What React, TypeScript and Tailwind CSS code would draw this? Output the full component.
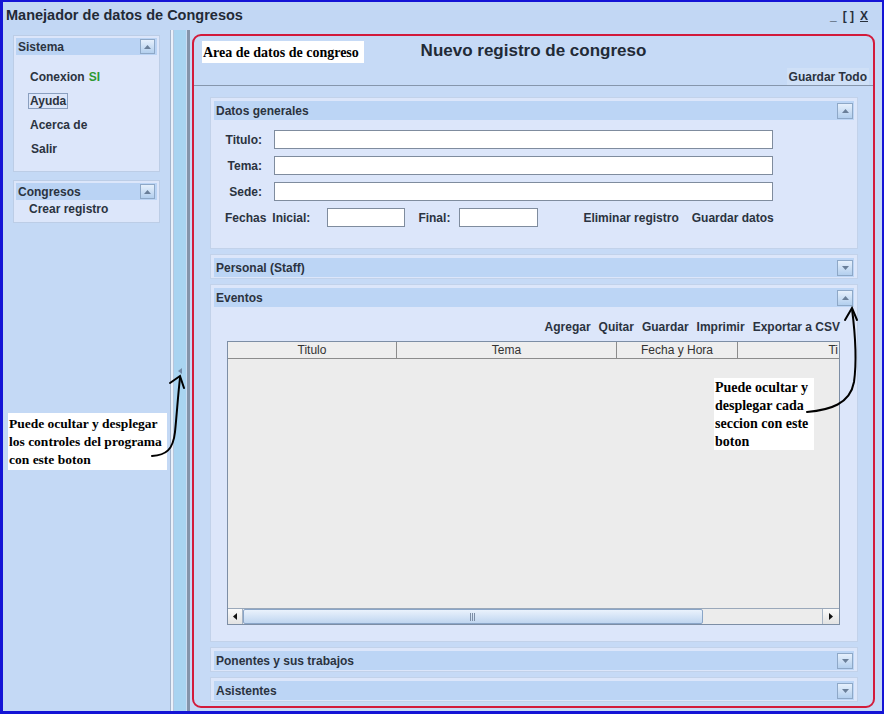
import React from "react";

// ─── Small pieces ─────────────────────────────────────────────────────────────

function CollapseBtn({ up, size = 16 }: { up: boolean; size?: number }) {
  return (
    <div
      className={
        "border border-[#8ea8c7] bg-gradient-to-b from-[#e6f0fc] to-[#b3cfee] flex items-center justify-center " +
        (size === 16 ? "w-[16px] h-[16px]" : "w-[15px] h-[15px]")
      }
    >
      <svg width="7" height="4" viewBox="0 0 7 4">
        <path d={up ? "M0 4 L3.5 0 L7 4 Z" : "M0 0 L3.5 4 L7 0 Z"} fill="#6a7f99" />
      </svg>
    </div>
  );
}

function Section({
  title,
  open,
  className,
  children,
}: {
  title: string;
  open: boolean;
  className: string;
  children?: React.ReactNode;
}) {
  return (
    <div className={"border border-[#c2d2ea] bg-[#dce6fa] px-[3px] pt-[3px] flex flex-col " + className}>
      <div className="h-[19px] shrink-0 bg-[#bcd5f5] flex items-center justify-between pl-[2px] pr-[1px]">
        <span className="text-[12px] font-bold text-[#2b3340]">{title}</span>
        <CollapseBtn up={open} />
      </div>
      {children}
    </div>
  );
}

function Field({ label }: { label: string }) {
  return (
    <div className="flex items-center h-[19px]">
      <span className="w-[48px] text-right text-[12px] font-bold text-[#2b3340]">{label}</span>
      <div className="ml-[12px] w-[499px] h-[19px] bg-white border border-[#7f8c9e]" />
    </div>
  );
}

function SideCard({ title, children, className }: { title: string; children: React.ReactNode; className: string }) {
  return (
    <div className={"border border-[#bccde6] bg-[#dce6fa] p-[2px] " + className}>
      <div className="h-[17px] bg-[#bad3f4] flex items-center justify-between pl-[2px] pr-[2px]">
        <span className="text-[12px] font-bold text-[#2b3340]">{title}</span>
        <CollapseBtn up size={15} />
      </div>
      {children}
    </div>
  );
}

// ─── Main ─────────────────────────────────────────────────────────────────────

export default function App() {
  return (
    <div className="w-[884px] h-[714px] relative border-t-2 border-l-[3px] border-r-2 border-b-[3px] border-[#1414d6] bg-[#c4d9f5] flex flex-col overflow-hidden font-['Liberation_Sans',Arial,sans-serif]">
      {/* ── Title bar ── */}
      <div className="h-[28px] shrink-0 bg-[#c2d7f4] flex items-center justify-between pl-[3px] pr-[14px]">
        <span className="text-[14.5px] font-bold text-[#222a36]">Manejador de datos de Congresos</span>
        <div className="flex items-center gap-[6px] text-[12px] font-bold text-[#27303d]">
          <span>_</span>
          <span>[ ]</span>
          <span className="underline">X</span>
        </div>
      </div>

      <div className="flex flex-1 min-h-0">
        {/* ── Left panel ── */}
        <div className="w-[167px] shrink-0 pl-[10px] pr-[10px] pt-[5px]">
          <SideCard title="Sistema" className="h-[137px]">
            <div className="pl-[14px] pt-[10px] text-[12px] font-bold text-[#2b3340]">
              <div className="h-[24px] flex items-center">
                Conexion <span className="ml-[4px] text-[#2e9a32]">SI</span>
              </div>
              <div className="h-[24px] flex items-center">
                <span className="-ml-[2px] border border-[#8a9fbf] px-[1px] leading-[14px]">Ayuda</span>
              </div>
              <div className="h-[24px] flex items-center">Acerca de</div>
              <div className="h-[24px] flex items-center pl-[1px]">Salir</div>
            </div>
          </SideCard>
          <SideCard title="Congresos" className="mt-[8px] h-[43px]">
            <div className="pl-[13px] h-[18px] flex items-center text-[12px] font-bold text-[#2b3340]">Crear registro</div>
          </SideCard>
        </div>

        {/* ── Splitter ── */}
        <div className="w-[20px] shrink-0 flex">
          <div className="w-[1px] bg-[#a3b5cd]" />
          <div className="w-[2px] bg-[#eaf1fb]" />
          <div className="w-[1px] bg-[#b7c7dc]" />
          <div className="w-[12px] bg-[#a9d4f1] flex items-center justify-center">
            <svg width="4" height="6" viewBox="0 0 4 6">
              <path d="M4 0 L0 3 L4 6 Z" fill="#7288a6" />
            </svg>
          </div>
          <div className="w-[1px] bg-[#c9dcf3]" />
          <div className="w-[3px] bg-[#8494aa]" />
        </div>

        {/* ── Main area ── */}
        <div className="flex-1 min-w-0 pl-[2px] pr-[7px] pt-[4px] pb-[3px] bg-[#c6daf6]">
          <div className="h-full border-2 border-[#d31b3b] rounded-[9px] bg-[#c6daf6] flex flex-col overflow-hidden">
            {/* Header */}
            <div className="h-[50px] shrink-0 relative border-b border-[#8696ac] flex flex-col">
              <div className="pt-[5px] h-[32px] text-center text-[17px] leading-[20px] font-bold text-[#222a36]">
                Nuevo registro de congreso
              </div>
              <div className="flex justify-end pr-[4px]">
                <span className="h-[17px] flex items-center px-[2px] bg-[#cfe0f7] text-[12px] font-bold text-[#2b3340]">
                  Guardar Todo
                </span>
              </div>
              <div className="absolute left-[8px] top-[5px] w-[162px] h-[22px] bg-white flex items-center pl-[1px] font-['Liberation_Serif','Times_New_Roman',serif] text-[14px] font-bold text-black">
                Area de datos de congreso
              </div>
            </div>

            {/* Sections */}
            <div className="flex-1 min-h-0 pl-[16px] pr-[15px] pt-[11px] flex flex-col gap-[5px]">
              <Section title="Datos generales" open className="h-[152px]">
                <div className="pt-[10px] flex flex-col gap-[7px]">
                  <Field label="Titulo:" />
                  <Field label="Tema:" />
                  <Field label="Sede:" />
                  <div className="flex items-center h-[19px] pl-[11px] text-[12px] font-bold text-[#2b3340]">
                    <span>Fechas</span>
                    <span className="ml-[6px]">Inicial:</span>
                    <div className="ml-[17px] w-[78px] h-[19px] bg-white border border-[#7f8c9e]" />
                    <span className="ml-[13px]">Final:</span>
                    <div className="ml-[9px] w-[79px] h-[19px] bg-white border border-[#7f8c9e]" />
                    <span className="ml-[45px]">Eliminar registro</span>
                    <span className="ml-[13px]">Guardar datos</span>
                  </div>
                </div>
              </Section>

              <Section title="Personal (Staff)" open={false} className="h-[25px]" />

              <Section title="Eventos" open className="h-[358px]">
                <div className="pl-[13px] pr-[14px] pt-[12px]">
                  <div className="h-[16px] flex items-center justify-end gap-[8px] text-[12px] font-bold text-[#2b3340]">
                    <span>Agregar</span>
                    <span>Quitar</span>
                    <span>Guardar</span>
                    <span>Imprimir</span>
                    <span>Exportar a CSV</span>
                  </div>
                  {/* Table */}
                  <div className="mt-[6px] h-[284px] border border-[#7d8ea5] bg-[#ececec] flex flex-col">
                    <div className="h-[17px] shrink-0 flex border-b border-[#8c8c8c] bg-[#eeeeee] text-[12px] text-[#333]">
                      <div className="w-[169px] border-r border-[#8c8c8c] flex items-center justify-center">Titulo</div>
                      <div className="w-[220px] border-r border-[#8c8c8c] flex items-center justify-center">Tema</div>
                      <div className="w-[121px] border-r border-[#8c8c8c] flex items-center justify-center">Fecha y Hora</div>
                      <div className="flex-1 flex items-center justify-end pr-[1px]">Ti</div>
                    </div>
                    <div className="flex-1" />
                    {/* Horizontal scrollbar */}
                    <div className="h-[16px] shrink-0 flex border-t border-[#9aa8ba] bg-[#ececec]">
                      <div className="w-[15px] border-r border-[#a6b3c4] bg-gradient-to-b from-[#fafafa] to-[#e2e2e2] flex items-center justify-center">
                        <svg width="4" height="7" viewBox="0 0 4 7">
                          <path d="M4 0 L0 3.5 L4 7 Z" fill="#111" />
                        </svg>
                      </div>
                      <div className="w-[460px] border border-[#8aa5c7] rounded-[2px] bg-gradient-to-b from-[#eaf2fc] to-[#c0d6f0] flex items-center justify-center">
                        <svg width="6" height="8" viewBox="0 0 6 8">
                          <path d="M0.5 0 V8 M2.5 0 V8 M4.5 0 V8" stroke="#7d8ea5" strokeWidth="1" />
                        </svg>
                      </div>
                      <div className="flex-1" />
                      <div className="w-[17px] border-l border-[#a6b3c4] bg-gradient-to-b from-[#fafafa] to-[#e2e2e2] flex items-center justify-center">
                        <svg width="4" height="7" viewBox="0 0 4 7">
                          <path d="M0 0 L4 3.5 L0 7 Z" fill="#111" />
                        </svg>
                      </div>
                    </div>
                  </div>
                </div>
              </Section>

              <Section title="Ponentes y sus trabajos" open={false} className="h-[25px]" />
              <Section title="Asistentes" open={false} className="h-[25px]" />
            </div>
          </div>
        </div>
      </div>

      {/* ── Annotations (overlay) ── */}
      <div className="absolute left-[5px] top-[411px] w-[159px] h-[57px] bg-white px-[1px] pt-[2px] whitespace-nowrap font-['Liberation_Serif','Times_New_Roman',serif] text-[13.5px] leading-[18px] font-bold text-black">
        Puede ocultar y desplegar
        <br />
        los controles del programa
        <br />
        con este boton
      </div>
      <div className="absolute left-[711px] top-[376px] w-[100px] h-[72px] bg-white pl-[1px] pt-[1px] font-['Liberation_Serif','Times_New_Roman',serif] text-[14px] leading-[18px] font-bold text-black">
        Puede ocultar y desplegar cada seccion con este boton
      </div>
      <svg className="absolute left-[-3px] top-[-2px] pointer-events-none" width="884" height="714" viewBox="0 0 884 714">
        <g fill="none" stroke="#000" strokeWidth="2" strokeLinecap="round">
          <path d="M152 456 C 166 455, 173 450, 175 432 C 177 412, 178 395, 180 378" />
          <path d="M170 383 L180 376 L184 388" />
          <path d="M807 412 C 830 410, 850 404, 854 382 C 857 360, 855 332, 852 309" />
          <path d="M845 320 L852 308 L857 320" />
        </g>
      </svg>
    </div>
  );
}
